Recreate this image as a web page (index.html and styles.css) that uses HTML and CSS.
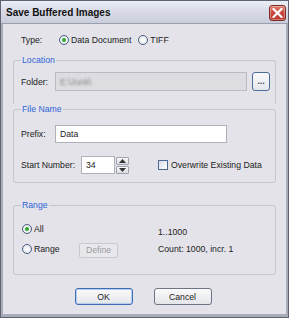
FILE: index.html
```html
<!DOCTYPE html>
<html>
<head>
<meta charset="utf-8">
<link rel="stylesheet" href="styles.css">
</head>
<body>
<div class="window">
  <div class="titlebar">
    <span class="title">Save Buffered Images</span>
    <span class="close"><svg width="11" height="10" viewBox="0 0 11 10"><path d="M1.5 1 L9.5 9 M9.5 1 L1.5 9" stroke="#fff" stroke-width="2.2" stroke-linecap="square"/></svg></span>
  </div>
  <div class="client">
    <div class="type-row">
      <span class="lbl">Type:</span>
      <span class="radio"><span class="rb on"></span>Data Document</span>
      <span class="radio"><span class="rb"></span>TIFF</span>
    </div>
    <fieldset class="grp loc">
      <legend>Location</legend>
      <div class="row">
        <span class="lbl w34">Folder:</span>
        <div class="input disabled"><span class="blur">E:\Junk\</span></div>
        <span class="btn dots">...</span>
      </div>
    </fieldset>
    <fieldset class="grp fname">
      <legend>File Name</legend>
      <div class="row">
        <span class="lbl w34">Prefix:</span>
        <div class="input prefix">Data</div>
      </div>
      <div class="row r2">
        <span class="lbl w60">Start Number:</span>
        <div class="input num">34</div>
        <div class="spin"><span class="sb"><svg width="7" height="4" viewBox="0 0 7 4"><path d="M0 4 L3.5 0 L7 4Z" fill="#333"/></svg></span><span class="sb"><svg width="7" height="4" viewBox="0 0 7 4"><path d="M0 0 L3.5 4 L7 0Z" fill="#333"/></svg></span></div>
        <span class="check"><span class="cb"></span>Overwrite Existing Data</span>
      </div>
    </fieldset>
    <fieldset class="grp range">
      <legend>Range</legend>
      <div class="rgrid">
        <span class="radio"><span class="rb on"></span>All</span>
        <span></span>
        <span class="info first">1..1000</span>
        <span class="radio"><span class="rb"></span>Range</span>
        <span class="btn define">Define</span>
        <span class="info second">Count: 1000, incr. 1</span>
      </div>
    </fieldset>
    <div class="buttons">
      <span class="btn big def">OK</span>
      <span class="btn big">Cancel</span>
    </div>
  </div>
</div>
</body>
</html>
```

FILE: styles.css
```css
* { box-sizing: border-box; }
html, body { margin: 0; padding: 0; background: #fff; }
body { font-family: "Liberation Sans", Arial, sans-serif; font-size: 8.7px; color: #222; }

.window {
  width: 289px; height: 318px;
  display: flex; flex-direction: column;
  background: #e3e3e9;
  border: 1px solid #5f6474;
  box-shadow: inset 0 0 0 1px #c9ccd8, inset 0 0 0 2px #8c90a0;
}
.titlebar {
  height: 23px; flex: none;
  display: flex; align-items: center; justify-content: space-between;
  padding: 0 2px 0 5px;
  background: linear-gradient(#eceef5, #d9dce7 45%, #c9ccda);
  border-bottom: 1px solid #9a9eae;
}
.title { font-weight: bold; font-size: 10px; color: #111; }
.close {
  width: 17px; height: 16px;
  display: flex; align-items: center; justify-content: center;
  background: linear-gradient(#e27a6e, #c9483b 50%, #b9362b);
  border: 1px solid #7d2a24; border-radius: 3px;
  margin-top: 1px;
  box-shadow: inset 0 0 0 1px rgba(255,255,255,0.35);
}

.client {
  flex: 1;
  display: flex; flex-direction: column;
  padding: 0 10px 0 10px;
  border-left: 2px solid #a9adba; border-right: 2px solid #a9adba; border-bottom: 3px solid #a9adba;
}

.type-row { display: flex; align-items: center; height: 13px; margin-top: 9px; padding-left: 8px; }
.type-row .lbl { width: 38px; }
.radio { display: flex; align-items: center; gap: 2px; margin-right: 7px; }
.rb {
  width: 10px; height: 10px; border-radius: 50%;
  border: 1px solid #4a5d7e;
  background: radial-gradient(#fff, #dfe3ea);
  display: flex; align-items: center; justify-content: center;
}
.rb.on::after { content: ""; width: 4px; height: 4px; border-radius: 50%; background: #2da82a; }

.grp {
  margin: 0; padding: 0 0 0 7px;
  border: 1px solid #c5c6cf; border-radius: 3px;
  min-width: 0;
}
.grp legend { color: #2f64d8; padding: 0 1px; margin-left: 0; font-size: 8.7px; line-height: 11px; }
.loc { margin-top: 9px; border-bottom: none; border-radius: 3px 3px 0 0; height: 49px; }
.fname { margin-top: 0; border-radius: 3px; height: 79px; }
.range { margin-top: 17px; height: 75px; }

.row { display: flex; align-items: center; }
.loc .row { margin-top: 6px; }
.lbl { flex: none; }
.w34 { width: 34px; }
.w60 { width: 60px; }
.input {
  height: 19px; padding: 3px 4px;
  border: 1px solid #b0b2bb; background: #fff;
  display: flex; align-items: center;
}
.input.disabled { width: 192px; background: #dcdce1; border-color: #b9bac2; }
.blur { color: #888; filter: blur(1px); }
.dots {
  width: 18px; height: 19px; margin-left: 5px;
  border: 1px solid #4d6e9b; border-radius: 3px;
  background: linear-gradient(#fafafc, #e5e6ec);
  font-weight: bold; color: #3a4a6a;
  display: flex; align-items: center; justify-content: center;
  padding-bottom: 2px;
}
.fname .row { margin-top: 10px; }
.input.prefix { width: 172px; height: 18px; }
.fname .r2 { margin-top: 13px; }
.input.num { width: 34px; height: 18px; }
.spin { display: flex; flex-direction: column; gap: 1px; margin-left: 1px; }
.sb {
  width: 13px; height: 8px;
  border: 1px solid #9ea3b0; border-radius: 1px;
  background: linear-gradient(#f8f8fa, #dcdde3);
  display: flex; align-items: center; justify-content: center;
}
.check { display: flex; align-items: center; gap: 3px; margin-left: 29px; }
.cb { width: 10px; height: 10px; border: 1px solid #4d6a94; background: linear-gradient(135deg, #dcdee6, #fff); }

.rgrid {
  display: grid;
  grid-template-columns: 57px 79px auto;
  grid-template-rows: 20px 20px;
  align-items: center;
  padding-left: 1px;
  margin-top: 8px;
}
.info.first { padding-top: 6px; }
.info.second { padding-bottom: 1px; }
.define {
  width: 39px; height: 15px;
  border: 1px solid #c8c9d0; border-radius: 2px;
  background: #e8e8ec; color: #9a9aa2;
  display: flex; align-items: center; justify-content: center;
  margin-top: 2px;
}

.buttons { display: flex; justify-content: center; gap: 21px; margin-top: 13px; padding-right: 3px; }
.btn.big {
  width: 58px; height: 17px;
  border: 1px solid #6d7584; border-radius: 3px;
  background: linear-gradient(#fbfbfc, #e4e5ea);
  display: flex; align-items: center; justify-content: center;
}
.btn.def { border-color: #3d6db5; box-shadow: inset 0 0 0 1px #b6cdee; }
```
